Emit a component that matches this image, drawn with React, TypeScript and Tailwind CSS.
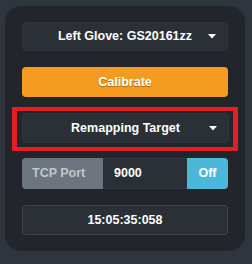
import React from "react";

function Caret() {
  return (
    <svg width="8" height="5" viewBox="0 0 8 5" className="justify-self-end mr-[11px]">
      <path d="M0 0 H8 L4 4.5 Z" fill="#ffffff" />
    </svg>
  );
}

function Dropdown({ label, tall }: { label: string; tall?: boolean }) {
  return (
    <div
      className={
        (tall ? "h-[30px]" : "h-[29px]") +
        " grid grid-cols-[1fr_auto_1fr] items-center rounded-[4px] bg-[#2b3037] border border-[#2f353c]"
      }
    >
      <span />
      <span className="text-white font-bold text-[12.5px]">{label}</span>
      <Caret />
    </div>
  );
}

export default function App() {
  return (
    <div
      className="w-[252px] h-[264px] bg-[#2e353d] pt-[6px] pl-[5px]"
      style={{ fontFamily: '"Liberation Sans", Arial, sans-serif' }}
    >
      <div className="w-[240px] h-[245px] rounded-[16px] bg-[#22262c] px-[17px] pt-[16px] flex flex-col gap-4">

        {/* Glove select */}
        <Dropdown label="Left Glove: GS20161zz" />

        {/* Calibrate */}
        <button className="h-[30px] rounded-[4px] bg-[#f39c1f] text-white font-bold text-[12.5px] [text-shadow:0_1px_1px_rgba(0,0,0,0.35)]">
          Calibrate
        </button>

        {/* Highlighted remap select */}
        <div className="-mx-[10px] -mt-[6px] -mb-[9px] border-x-[5px] border-y-[4px] border-[#e31e24] pl-[5px] pr-[4px] pt-[2px] pb-[4px]">
          <Dropdown label="Remapping Target" tall />
        </div>

        {/* TCP port */}
        <div className="h-[31px] flex text-[12.5px] font-bold">
          <div className="w-[81px] flex items-center pl-[10px] bg-[#6c757d] text-[#c2c6ca] rounded-l-[4px]">
            TCP Port
          </div>
          <div className="flex-1 flex items-center pl-[11px] bg-[#2b3037] border-y border-[#343a41] text-white">
            9000
          </div>
          <div className="w-[41px] flex items-center justify-center bg-[#4bb8d9] text-white rounded-r-[4px]">
            Off
          </div>
        </div>

        {/* Clock */}
        <div className="h-[30px] flex items-center justify-center rounded-[3px] bg-[#2b3037] border border-[#3d444c] text-white font-bold text-[12.5px]">
          15:05:35:058
        </div>
      </div>
    </div>
  );
}
